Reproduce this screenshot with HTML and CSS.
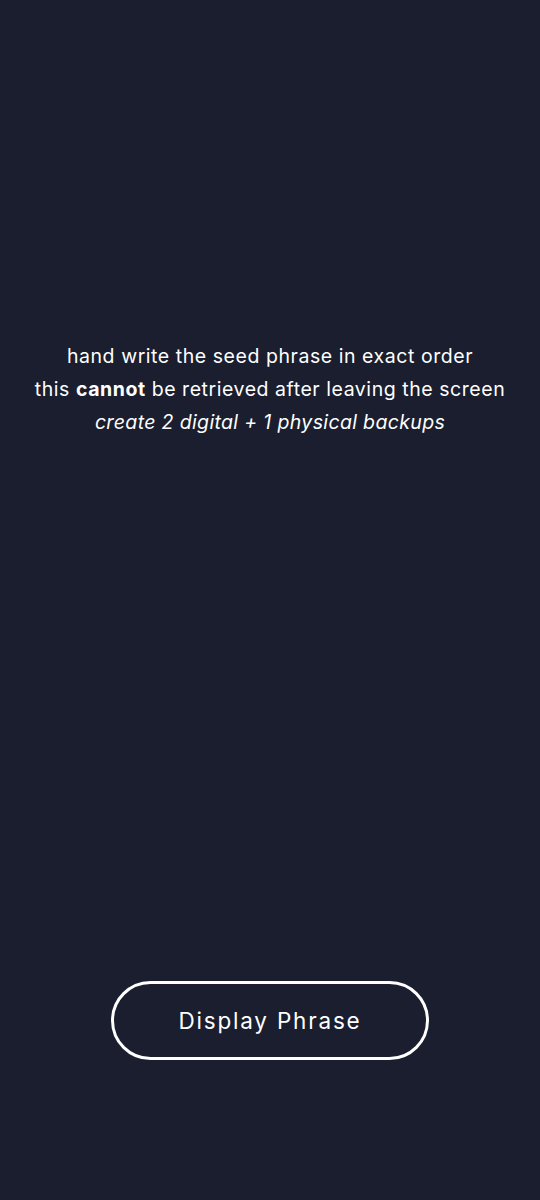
FILE: index.html
```html
<!DOCTYPE html>
<html lang="en">
<head>
<meta charset="utf-8">
<link rel="stylesheet" href="styles.css">
<title>Seed phrase</title>
</head>
<body>
<main class="screen">
  <section class="notice">
    <p class="line">hand write the seed phrase in exact order</p>
    <p class="line">this <strong>cannot</strong> be retrieved after leaving the screen</p>
    <p class="line italic">create 2 digital + 1 physical backups</p>
  </section>
  <div class="actions">
    <button class="btn" type="button">Display Phrase</button>
  </div>
</main>
</body>
</html>
```
FILE: styles.css
```css
html, body {
  margin: 0;
  padding: 0;
  background: #1a1e2e;
}
.screen {
  width: 540px;
  height: 1200px;
  display: flex;
  flex-direction: column;
  align-items: center;
  box-sizing: border-box;
  padding-top: 340px;
  font-family: Inter, "Noto Sans", sans-serif;
  color: #ffffff;
}
.notice {
  text-align: center;
}
.line {
  margin: 0;
  font-size: 19.5px;
  line-height: 33px;
  letter-spacing: 0.55px;
}
.line strong {
  font-weight: 700;
}
.italic {
  font-style: italic;
  letter-spacing: 0.35px;
}
.actions {
  margin-top: 542px;
}
.btn {
  width: 318px;
  height: 79px;
  border: 3px solid #ffffff;
  border-radius: 40px;
  background: transparent;
  color: #ffffff;
  font-family: Inter, "Noto Sans", sans-serif;
  font-size: 22.5px;
  font-weight: 400;
  letter-spacing: 1.8px;
  cursor: pointer;
}
```
